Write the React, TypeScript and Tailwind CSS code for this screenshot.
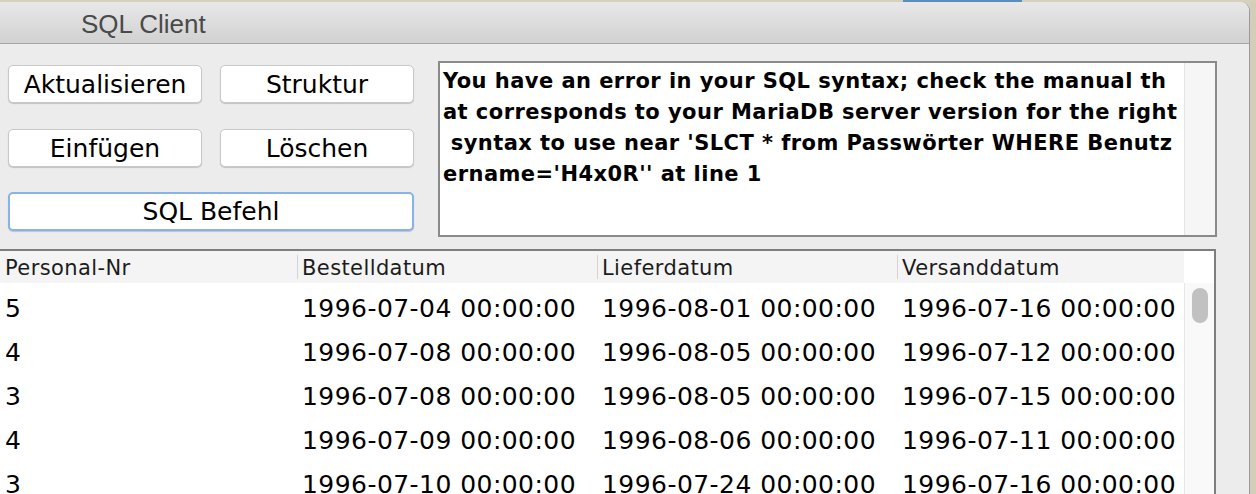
import React from "react";

const rows = [
  ["5", "1996-07-04 00:00:00", "1996-08-01 00:00:00", "1996-07-16 00:00:00"],
  ["4", "1996-07-08 00:00:00", "1996-08-05 00:00:00", "1996-07-12 00:00:00"],
  ["3", "1996-07-08 00:00:00", "1996-08-05 00:00:00", "1996-07-15 00:00:00"],
  ["4", "1996-07-09 00:00:00", "1996-08-06 00:00:00", "1996-07-11 00:00:00"],
  ["3", "1996-07-10 00:00:00", "1996-07-24 00:00:00", "1996-07-16 00:00:00"],
];

const headers = ["Personal-Nr", "Bestelldatum", "Lieferdatum", "Versanddatum"];
const colW = ["w-[297px]", "w-[300px]", "w-[300px]", "w-[287px]"];

const errorLines = [
  "You have an error in your SQL syntax; check the manual th",
  "at corresponds to your MariaDB server version for the right",
  " syntax to use near 'SLCT * from Passwörter WHERE Benutz",
  "ername='H4x0R'' at line 1",
];

function Btn({ label, focus }: { label: string; focus?: boolean }) {
  return (
    <div
      className={
        "flex items-center justify-center rounded-[5px] bg-white text-[25px] leading-none text-black shadow-[0_1px_1px_rgba(0,0,0,0.18)] " +
        (focus
          ? "h-[39px] border-2 border-[#86b3ea]"
          : "h-[38px] border border-[#c8c8c8]")
      }
      style={{ fontFamily: '"DejaVu Sans", sans-serif' }}
    >
      {label}
    </div>
  );
}

export default function App() {
  return (
    <div className="flex h-[494px] w-[1256px] flex-col overflow-hidden bg-[#d6d0bc]">
      {/* desktop strip on top */}
      <div className="flex h-[2px] shrink-0">
        <div className="w-[903px]" />
        <div className="w-[119px] bg-[#5b8dbd]" />
      </div>
      <div className="flex min-h-0 flex-1">
        {/* window */}
        <div className="flex w-[1250px] flex-col overflow-hidden rounded-tr-[9px] border-r border-[#9a9a9a] bg-[#ececec]">
          {/* title bar */}
          <div className="flex h-[42px] shrink-0 items-center border-b border-[#a6a6a6] bg-gradient-to-b from-[#e8e8e8] to-[#d1d1d1] pl-[81px] pt-[3px]">
            <span
              className="text-[26px] leading-none text-[#4a4a4a]"
              style={{ fontFamily: '"Liberation Sans", Arial, sans-serif' }}
            >
              SQL Client
            </span>
          </div>

          {/* top area */}
          <div className="flex shrink-0 pl-[8px]">
            <div className="flex w-[406px] flex-col pt-[21px]">
              <div className="grid grid-cols-2 gap-x-[18px]">
                <Btn label="Aktualisieren" />
                <Btn label="Struktur" />
              </div>
              <div className="mt-[26px] grid grid-cols-2 gap-x-[18px]">
                <Btn label="Einfügen" />
                <Btn label="Löschen" />
              </div>
              <div className="mt-[25px]">
                <Btn label="SQL Befehl" focus />
              </div>
            </div>
            <div className="ml-[24px] mt-[17px] flex h-[176px] w-[779px] border-2 border-[#8a8a8a] bg-white">
              <div
                className="flex-1 overflow-hidden whitespace-pre pl-[3px] pt-[3px] text-[21px] font-bold leading-[31px] tracking-[0.45px] text-black"
                style={{ fontFamily: '"DejaVu Sans", sans-serif' }}
              >
                {errorLines.map((l, i) => (
                  <div key={i}>{l}</div>
                ))}
              </div>
              <div className="w-[31px] border-l border-[#e4e4e4] bg-[#f6f6f6]" />
            </div>
          </div>

          {/* table */}
          <div className="mt-[12px] flex min-h-0 w-[1216px] flex-1 flex-col overflow-hidden border-r-2 border-t-2 border-[#7e7e7e] bg-white">
            <div className="flex h-[32px] shrink-0">
              {headers.map((h, i) => (
                <div
                  key={h}
                  className={
                    colW[i] +
                    " flex items-center bg-[#f4f4f4] pl-[5px] pt-[3px] text-[21px] tracking-[0.4px] text-[#1c1c1c]"
                  }
                  style={{ fontFamily: '"DejaVu Sans", sans-serif' }}
                >
                  {i > 0 && <div className="-ml-[5px] mr-[4px] -mt-[3px] h-[24px] w-px bg-[#d4d4d4]" />}
                  {h}
                </div>
              ))}
              <div className="flex-1 bg-white" />
            </div>
            <div className="flex min-h-0 flex-1">
              <div className="flex w-[1184px] flex-col pt-[3px]">
                {rows.map((r, ri) => (
                  <div key={ri} className="flex h-[44px] shrink-0 items-center">
                    {r.map((c, ci) => (
                      <div
                        key={ci}
                        className={
                          colW[ci] +
                          " whitespace-nowrap pl-[5px] text-[25px] leading-none tracking-[0.45px] text-black"
                        }
                        style={{ fontFamily: '"DejaVu Sans", sans-serif' }}
                      >
                        {c}
                      </div>
                    ))}
                  </div>
                ))}
              </div>
              <div className="flex flex-1 justify-center border-l border-[#e6e6e6] bg-[#f9f9f9] pt-[5px]">
                <div className="h-[35px] w-[16px] rounded-full bg-[#c1c1c1]" />
              </div>
            </div>
          </div>
        </div>
        {/* desktop on right */}
        <div className="flex-1 bg-[#d3cdb9]" />
      </div>
    </div>
  );
}
